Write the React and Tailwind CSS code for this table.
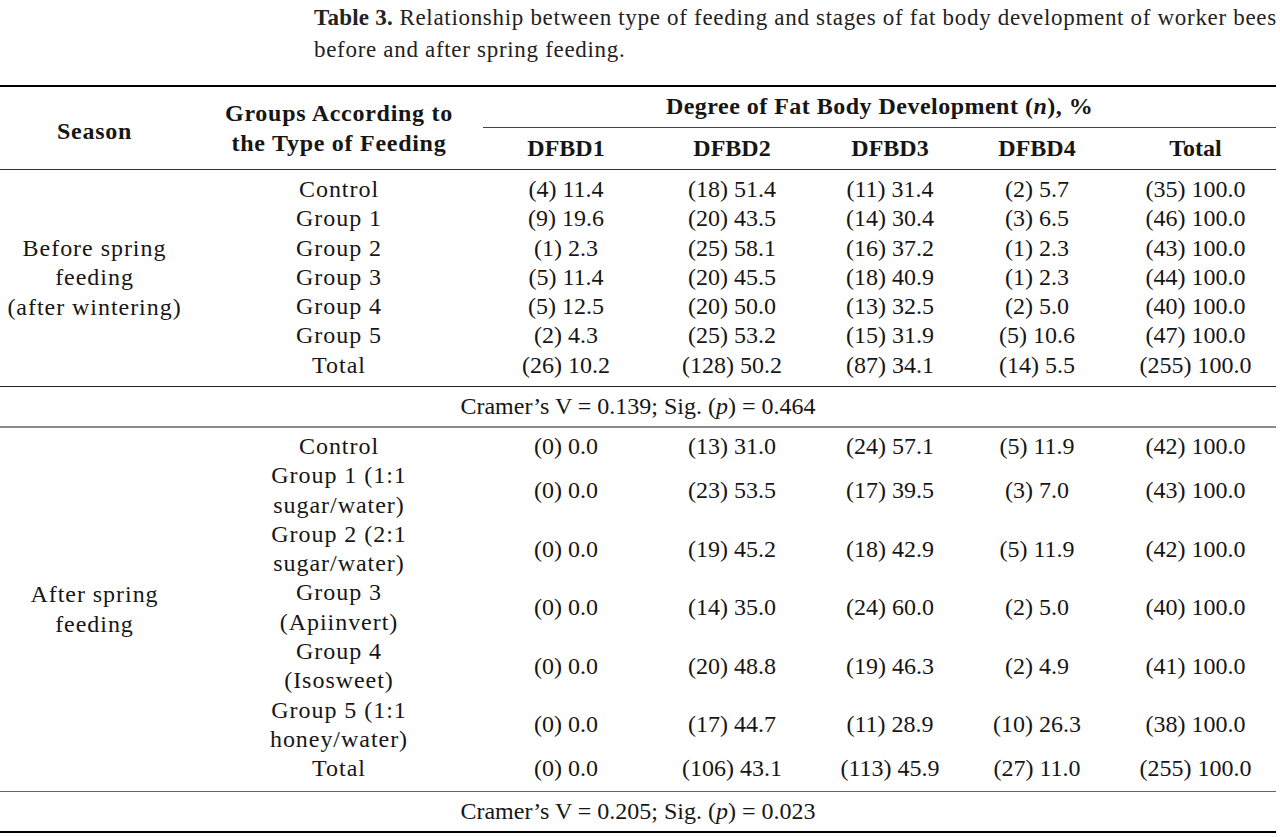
const before = [
  ['Control', '(4) 11.4', '(18) 51.4', '(11) 31.4', '(2) 5.7', '(35) 100.0'],
  ['Group 1', '(9) 19.6', '(20) 43.5', '(14) 30.4', '(3) 6.5', '(46) 100.0'],
  ['Group 2', '(1) 2.3', '(25) 58.1', '(16) 37.2', '(1) 2.3', '(43) 100.0'],
  ['Group 3', '(5) 11.4', '(20) 45.5', '(18) 40.9', '(1) 2.3', '(44) 100.0'],
  ['Group 4', '(5) 12.5', '(20) 50.0', '(13) 32.5', '(2) 5.0', '(40) 100.0'],
  ['Group 5', '(2) 4.3', '(25) 53.2', '(15) 31.9', '(5) 10.6', '(47) 100.0'],
  ['Total', '(26) 10.2', '(128) 50.2', '(87) 34.1', '(14) 5.5', '(255) 100.0'],
];

const after = [
  ['Control', '(0) 0.0', '(13) 31.0', '(24) 57.1', '(5) 11.9', '(42) 100.0'],
  ['Group 1 (1:1\nsugar/water)', '(0) 0.0', '(23) 53.5', '(17) 39.5', '(3) 7.0', '(43) 100.0'],
  ['Group 2 (2:1\nsugar/water)', '(0) 0.0', '(19) 45.2', '(18) 42.9', '(5) 11.9', '(42) 100.0'],
  ['Group 3\n(Apiinvert)', '(0) 0.0', '(14) 35.0', '(24) 60.0', '(2) 5.0', '(40) 100.0'],
  ['Group 4\n(Isosweet)', '(0) 0.0', '(20) 48.8', '(19) 46.3', '(2) 4.9', '(41) 100.0'],
  ['Group 5 (1:1\nhoney/water)', '(0) 0.0', '(17) 44.7', '(11) 28.9', '(10) 26.3', '(38) 100.0'],
  ['Total', '(0) 0.0', '(106) 43.1', '(113) 45.9', '(27) 11.0', '(255) 100.0'],
];

const cols = 'grid grid-cols-[300px_154px_178px_138px_156px_161px] items-center';

const Row = ({ row }) => (
  <div className={cols}>
    <div className="whitespace-pre-line text-center tracking-[0.04em]">{row[0]}</div>
    {row.slice(1).map((v, i) => (
      <div key={i} className="text-center">{v}</div>
    ))}
  </div>
);

const Section = ({ season, rows, height, pt }) => (
  <div className={`flex ${height}`}>
    <div className="w-[189px] flex items-center justify-center text-center whitespace-pre-line tracking-[0.04em]">
      {season}
    </div>
    <div className={`flex flex-col ${pt}`}>
      {rows.map((r) => (
        <Row key={r[0]} row={r} />
      ))}
    </div>
  </div>
);

export default function App() {
  return (
    <div className="w-[1280px] h-[837px] bg-white text-[#161616] font-['Liberation_Serif','Times_New_Roman',serif] overflow-hidden">
      <div className="h-[85px] pl-[314px] pt-[2px] text-[23px] leading-[32px] tracking-[0.03em] text-[#222]">
        <span className="font-bold tracking-[0.01em]">Table 3.</span> Relationship between type of feeding and stages of fat body development of worker bees
        <br />
        before and after spring feeding.
      </div>

      <div className="w-[1276px] text-[24px] leading-[29.3px]">
        <div className="border-t-2 border-black" />

        <div className="flex h-[82px] font-bold">
          <div className="w-[189px] flex items-center justify-center pt-2 tracking-[0.03em]">Season</div>
          <div className="w-[300px] flex items-center justify-center text-center leading-[30px] tracking-[0.03em]">
            Groups According to
            <br />
            the Type of Feeding
          </div>
          <div className="flex-1 flex flex-col">
            <div className="h-[41px] flex items-center justify-center -ml-[6px] border-b border-[#444] tracking-[0.02em]">
              Degree of Fat Body Development (<i>n</i>), %
            </div>
            <div className="flex-1 grid grid-cols-[154px_178px_138px_156px_161px] items-center text-center">
              <div>DFBD1</div>
              <div>DFBD2</div>
              <div>DFBD3</div>
              <div>DFBD4</div>
              <div>Total</div>
            </div>
          </div>
        </div>

        <div className="border-t border-[#333]" />

        <Section
          season={'Before spring\nfeeding\n(after wintering)'}
          rows={before}
          height="h-[216px]"
          pt="pt-[5px]"
        />

        <div className="border-t border-[#222]" />
        <div className="h-[39px] flex items-center justify-center">
          Cramer’s V = 0.139; Sig. (<i>p</i>) = 0.464
        </div>
        <div className="border-t-2 border-[#8a8a8a]" />

        <Section season={'After spring\nfeeding'} rows={after} height="h-[363px]" pt="pt-[4px]" />

        <div className="border-t border-[#666]" />
        <div className="h-[39px] flex items-center justify-center">
          Cramer’s V = 0.205; Sig. (<i>p</i>) = 0.023
        </div>
        <div className="border-t-2 border-black" />
      </div>
    </div>
  );
}
